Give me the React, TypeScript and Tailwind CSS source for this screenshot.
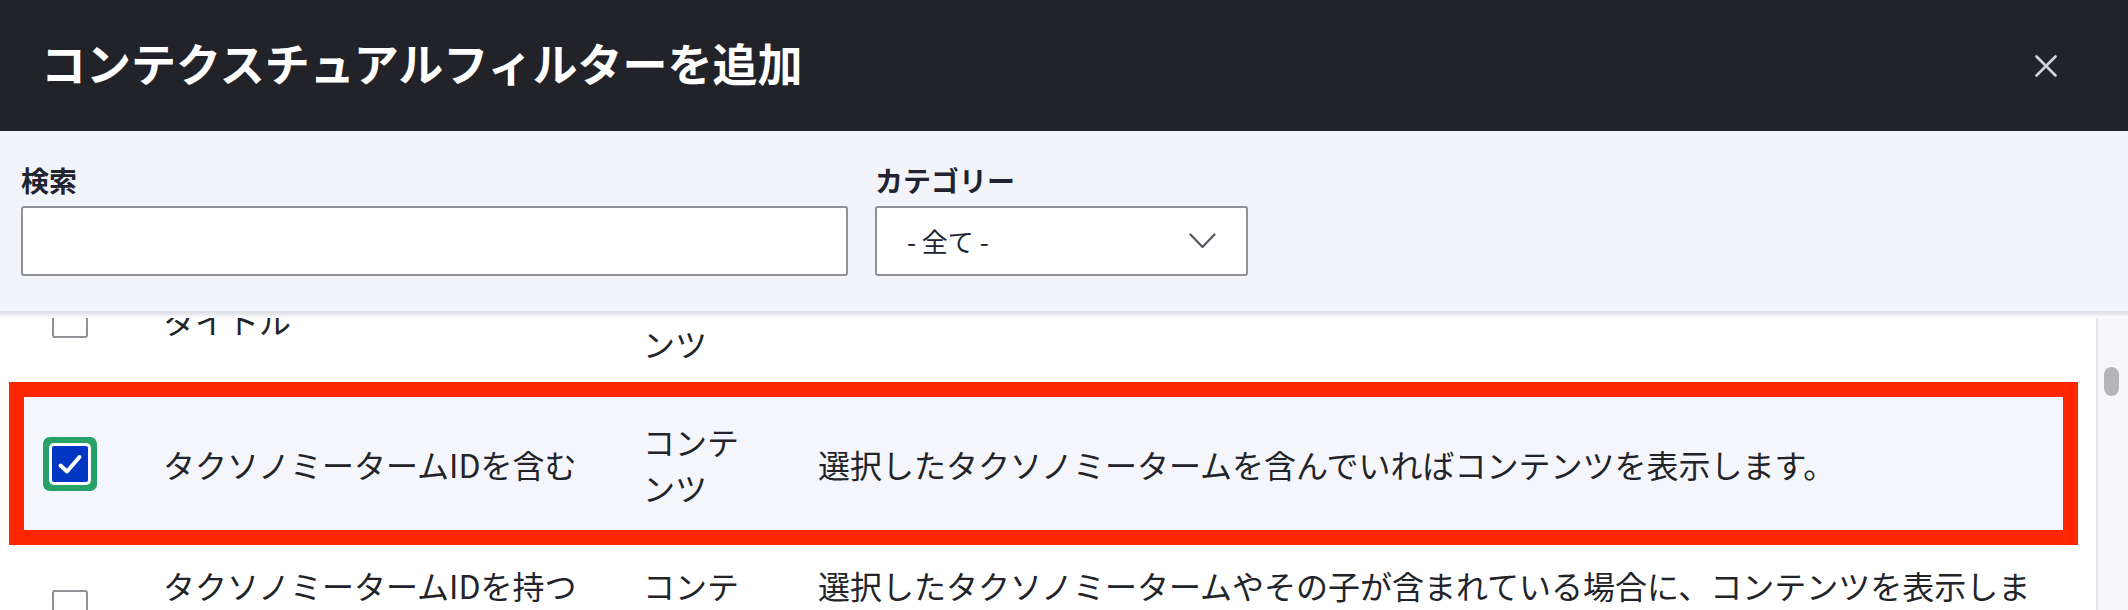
import React from "react";

const font = "font-['Noto_Sans_CJK_JP','Noto_Sans',sans-serif]";

function Checkbox({ checked }: { checked?: boolean }) {
  if (checked) {
    return (
      <div className="w-[36px] h-[36px] rounded-[2px] bg-[#0036c4] shadow-[0_0_0_3px_#ffffff,0_0_0_9px_#26a269] flex items-center justify-center">
        <svg width="36" height="36" viewBox="0 0 36 36">
          <path d="M8.5 19.5 L15 25.5 L27.5 11" fill="none" stroke="#ffffff" strokeWidth="4" strokeLinecap="round" strokeLinejoin="round" />
        </svg>
      </div>
    );
  }
  return <div className="w-[36px] h-[36px] rounded-[3px] border-2 border-[#909098] bg-white" />;
}

type RowProps = { checked?: boolean; name: string; cat: string; desc: string; highlight?: boolean };

function Row({ checked, name, cat, desc, highlight }: RowProps) {
  return (
    <div className="relative isolate flex items-center py-[26px] text-[32px] leading-[46px] text-[#232429]">
      {highlight && (
        <div className="absolute -top-[10px] -bottom-[9px] left-[9px] right-[18px] border-[15px] border-[#fe2600] bg-[#f5f6fb] -z-10" />
      )}
      <div className="w-[163px] shrink-0 pl-[52px]">
        <Checkbox checked={checked} />
      </div>
      <div className="w-[480px] shrink-0 pr-[50px]">{name}</div>
      <div className="w-[175px] shrink-0 pr-[65px]">{cat}</div>
      <div className="w-[1230px] shrink-0">{desc}</div>
    </div>
  );
}

export default function App() {
  return (
    <div className={`w-[2128px] h-[610px] overflow-hidden flex flex-col bg-white ${font}`}>
      <div className="h-[131px] shrink-0 bg-[#222329] flex items-center justify-between pl-[41px] pr-[71px]">
        <h1 className="text-[45px] font-bold text-white leading-none mb-[7px]">コンテクスチュアルフィルターを追加</h1>
        <svg width="22" height="22" viewBox="0 0 22 22">
          <path d="M1.5 1.5 L20.5 20.5 M20.5 1.5 L1.5 20.5" stroke="#d3d4d9" strokeWidth="2.6" strokeLinecap="round" />
        </svg>
      </div>

      <div className="relative z-10 shrink-0 bg-[#f3f4f9] pt-[28px] pb-[35px] px-[21px] flex gap-[27px]">
        <div className="flex flex-col">
          <label className="text-[28px] font-bold leading-[42px] text-[#222330]">検索</label>
          <div className="mt-[5px] w-[827px] h-[70px] border-2 border-[#909098] rounded-[3px] bg-white" />
        </div>
        <div className="flex flex-col">
          <label className="text-[28px] font-bold leading-[42px] text-[#222330]">カテゴリー</label>
          <div className="mt-[5px] w-[373px] h-[70px] border-2 border-[#909098] rounded-[3px] bg-white flex items-center justify-between pl-[30px] pr-[30px]">
            <span className="text-[26px] leading-none text-[#222330]">- 全て -</span>
            <svg width="27" height="16" viewBox="0 0 27 16">
              <path d="M1.5 1.5 L13.5 14 L25.5 1.5" fill="none" stroke="#55565f" strokeWidth="2.2" strokeLinecap="round" strokeLinejoin="round" />
            </svg>
          </div>
        </div>
      </div>

      <div className="relative flex-1 flex overflow-hidden">
        <div className="absolute top-0 left-0 right-0 h-[7px] z-10 bg-[linear-gradient(to_bottom,#dcdde3_0%,#e4e5ea_35%,#f6f6f9_75%,#fdfdfe_100%)]" />
        <div className="flex-1 overflow-hidden">
          <div className="-mt-[63px]">
            <Row name="タイトル" cat="コンテンツ" desc="" />
            <Row
              checked
              highlight
              name="タクソノミータームIDを含む"
              cat="コンテンツ"
              desc="選択したタクソノミータームを含んでいればコンテンツを表示します。"
            />
            <Row
              name="タクソノミータームIDを持つ（深さ付き）"
              cat="コンテンツ"
              desc="選択したタクソノミータームやその子が含まれている場合に、コンテンツを表示します。"
            />
          </div>
        </div>
        <div className="w-[32px] shrink-0 border-l-2 border-[#e6e6eb] bg-[#f7f7f9] pt-[56px] pl-[6px]">
          <div className="w-[15px] h-[29px] rounded-full bg-[#b5b5b9]" />
        </div>
      </div>
    </div>
  );
}
